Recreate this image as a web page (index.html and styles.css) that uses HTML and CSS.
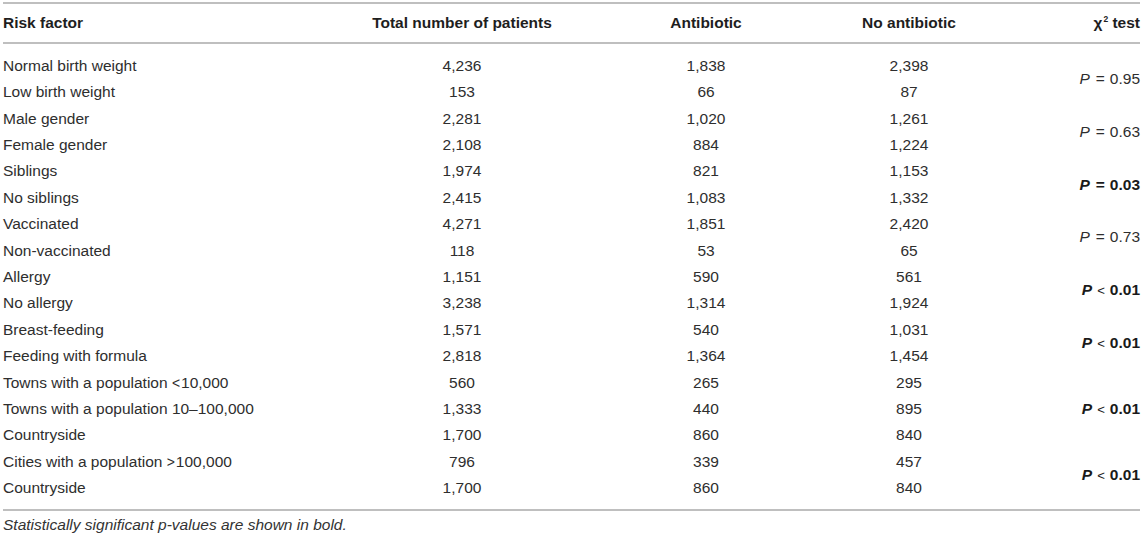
FILE: index.html
```html
<!DOCTYPE html>
<html lang="en">
<head>
  <meta charset="UTF-8" />
  <meta name="viewport" content="width=device-width, initial-scale=1.0"/>
  <title>Risk factors and antibiotic use</title>
  <link rel="stylesheet" href="styles.css">
</head>
<body>

  <div class="table-wrap">
    <table class="data">
      <colgroup>
        <col class="c-factor">
        <col class="c-total">
        <col class="c-abx">
        <col class="c-noabx">
        <col class="c-test">
      </colgroup>
      <thead>
        <tr>
          <th class="left">Risk factor</th>
          <th>Total number of patients</th>
          <th>Antibiotic</th>
          <th>No antibiotic</th>
          <th class="right">χ<sup>2</sup> test</th>
        </tr>
      </thead>
      <tbody>
        <tr class="gap gap-top"><td colspan="5"></td></tr>

        <tr>
          <td class="left">Normal birth weight</td><td>4,236</td><td>1,838</td><td>2,398</td>
          <td class="pval" rowspan="2"><i>P</i><span class="op">=</span>0.95</td>
        </tr>
        <tr><td class="left">Low birth weight</td><td>153</td><td>66</td><td>87</td></tr>

        <tr>
          <td class="left">Male gender</td><td>2,281</td><td>1,020</td><td>1,261</td>
          <td class="pval" rowspan="2"><i>P</i><span class="op">=</span>0.63</td>
        </tr>
        <tr><td class="left">Female gender</td><td>2,108</td><td>884</td><td>1,224</td></tr>

        <tr>
          <td class="left">Siblings</td><td>1,974</td><td>821</td><td>1,153</td>
          <td class="pval sig" rowspan="2"><i>P</i><span class="op">=</span>0.03</td>
        </tr>
        <tr><td class="left">No siblings</td><td>2,415</td><td>1,083</td><td>1,332</td></tr>

        <tr>
          <td class="left">Vaccinated</td><td>4,271</td><td>1,851</td><td>2,420</td>
          <td class="pval" rowspan="2"><i>P</i><span class="op">=</span>0.73</td>
        </tr>
        <tr><td class="left">Non-vaccinated</td><td>118</td><td>53</td><td>65</td></tr>

        <tr>
          <td class="left">Allergy</td><td>1,151</td><td>590</td><td>561</td>
          <td class="pval sig" rowspan="2"><i>P</i><span class="op lt">&lt;</span>0.01</td>
        </tr>
        <tr><td class="left">No allergy</td><td>3,238</td><td>1,314</td><td>1,924</td></tr>

        <tr>
          <td class="left">Breast-feeding</td><td>1,571</td><td>540</td><td>1,031</td>
          <td class="pval sig" rowspan="2"><i>P</i><span class="op lt">&lt;</span>0.01</td>
        </tr>
        <tr><td class="left">Feeding with formula</td><td>2,818</td><td>1,364</td><td>1,454</td></tr>

        <tr>
          <td class="left">Towns with a population <span class="rel">&lt;</span>10,000</td><td>560</td><td>265</td><td>295</td>
          <td class="pval sig" rowspan="3"><i>P</i><span class="op lt">&lt;</span>0.01</td>
        </tr>
        <tr><td class="left">Towns with a population 10–100,000</td><td>1,333</td><td>440</td><td>895</td></tr>
        <tr><td class="left">Countryside</td><td>1,700</td><td>860</td><td>840</td></tr>

        <tr>
          <td class="left">Cities with a population <span class="rel">&gt;</span>100,000</td><td>796</td><td>339</td><td>457</td>
          <td class="pval sig" rowspan="2"><i>P</i><span class="op lt">&lt;</span>0.01</td>
        </tr>
        <tr><td class="left">Countryside</td><td>1,700</td><td>860</td><td>840</td></tr>

        <tr class="gap gap-bottom"><td colspan="5"></td></tr>
      </tbody>
    </table>

    <p class="note">Statistically significant p-values are shown in bold.</p>
  </div>

</body>
</html>
```

FILE: styles.css
```css
body {
  margin: 0;
  background: #ffffff;
  color: #2e2e2e;
  font-family: "Liberation Sans", Arial, sans-serif;
  font-size: 15.5px;
}

.table-wrap {
  width: 1137px;
  margin: 2px 0 0 3px;
}

.data {
  width: 100%;
  table-layout: fixed;
  border-collapse: collapse;
  border-top: 2px solid #bfbfbf;
  border-bottom: 2px solid #bfbfbf;
}

.c-factor { width: 337px; }
.c-total { width: 244px; }
.c-abx { width: 244px; }
.c-noabx { width: 162px; }
.c-test { width: 150px; }

th, td {
  padding: 0;
  text-align: center;
  white-space: nowrap;
}

th {
  height: 38px;
  font-weight: bold;
  color: #1e1e1e;
  border-bottom: 2px solid #bfbfbf;
}

td {
  height: 26.4px;
  line-height: 26.4px;
}

.left { text-align: left; }
.right { text-align: right; }

sup {
  font-size: 0.55em;
  vertical-align: 0.7em;
  line-height: 0;
  margin-left: 1px;
}

.pval {
  text-align: right;
  vertical-align: middle;
}

.pval.sig {
  font-weight: bold;
  color: #1a1a1a;
}

/* math-style spacing around = and < */
.op {
  display: inline-block;
  margin: 0 5px 0 6px;
}

.op.lt {
  font-size: 0.85em;
  font-weight: normal;
  margin: 0 5px 0 5px;
}

.rel {
  font-size: 0.9em;
  margin-right: 1px;
}

.gap-top td { height: 8.8px; line-height: 0; }
.gap-bottom td { height: 7.4px; line-height: 0; }

.note {
  margin: 0;
  line-height: 27px;
  font-style: italic;
  color: #333;
}
```
